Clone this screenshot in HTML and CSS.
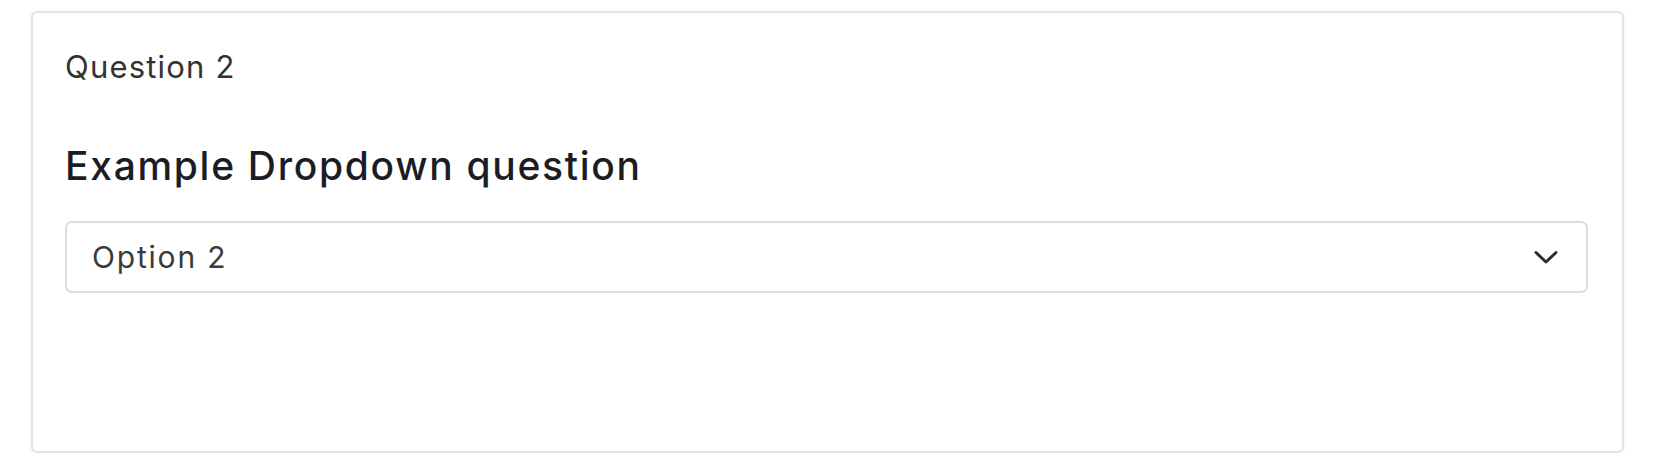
FILE: index.html
```html
<!DOCTYPE html>
<html lang="en">
<head>
<meta charset="utf-8">
<title>Question 2</title>
<link rel="stylesheet" href="styles.css">
</head>
<body>
<div class="card">
  <div class="q-label">Question 2</div>
  <h2 class="q-title">Example Dropdown question</h2>
  <div class="select">
    <span class="select-value">Option 2</span>
    <svg class="chevron" width="26" height="16" viewBox="0 0 26 16" aria-hidden="true">
      <path d="M3 3.5 L13 13 L23 3.5" fill="none" stroke="#2e2e2e" stroke-width="3" stroke-linecap="round" stroke-linejoin="round"/>
    </svg>
  </div>
</div>
</body>
</html>
```
FILE: styles.css
```css
html, body {
  margin: 0;
  padding: 0;
  background: #ffffff;
}
body {
  font-family: Inter, "Open Sans", sans-serif;
}
.card {
  box-sizing: border-box;
  margin: 11px 0 0 31px;
  width: 1593px;
  height: 442px;
  border: 2px solid #e3e3e3;
  border-radius: 6px;
  box-shadow: 0 1px 4px rgba(0,0,0,0.06);
  padding: 36px 34px 0 32px;
}
.q-label {
  font-size: 31px;
  line-height: 36px;
  color: #333333;
  letter-spacing: 1.2px;
}
.q-title {
  margin: 59px 0 0 0;
  font-size: 39px;
  line-height: 44px;
  font-weight: 500;
  color: #1b1c24;
  letter-spacing: 1.7px;
}
.select {
  box-sizing: border-box;
  margin-top: 33px;
  height: 72px;
  border: 2px solid #dcdcdc;
  border-radius: 7px;
  display: flex;
  align-items: center;
  justify-content: space-between;
  padding: 0 27px 0 25px;
}
.select-value {
  font-size: 30px;
  color: #3a3a3a;
  letter-spacing: 1.8px;
}
.chevron {
  display: block;
}
```
